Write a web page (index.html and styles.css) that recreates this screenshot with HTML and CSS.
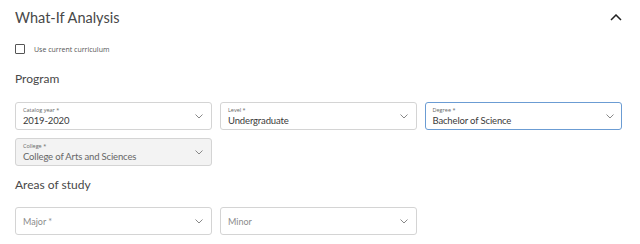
FILE: index.html
```html
<!DOCTYPE html>
<html lang="en">
<head>
  <meta charset="UTF-8" />
  <title>What-If Analysis</title>
  <link rel="stylesheet" href="styles.css">
</head>
<body>

<section class="panel">
  <header class="panel-head">
    <h1>What-If Analysis</h1>
    <button class="collapse" aria-label="Collapse">
      <svg width="12" height="7" viewBox="0 0 12 7"><path d="M1 6 L6 1 L11 6" fill="none" stroke="#222" stroke-width="1.5"/></svg>
    </button>
  </header>

  <label class="check">
    <span class="box"></span>
    <span>Use current curriculum</span>
  </label>

  <h2 class="program">Program</h2>
  <div class="fields">
    <div class="field">
      <div class="text">
        <span class="label">Catalog year *</span>
        <span class="value">2019-2020</span>
      </div>
      <svg class="chev" width="8" height="5" viewBox="0 0 8 5"><path d="M0.5 0.5 L4 4 L7.5 0.5" fill="none" stroke="#888" stroke-width="1"/></svg>
    </div>
    <div class="field">
      <div class="text">
        <span class="label">Level *</span>
        <span class="value">Undergraduate</span>
      </div>
      <svg class="chev" width="8" height="5" viewBox="0 0 8 5"><path d="M0.5 0.5 L4 4 L7.5 0.5" fill="none" stroke="#888" stroke-width="1"/></svg>
    </div>
    <div class="field focused">
      <div class="text">
        <span class="label">Degree *</span>
        <span class="value">Bachelor of Science</span>
      </div>
      <svg class="chev" width="8" height="5" viewBox="0 0 8 5"><path d="M0.5 0.5 L4 4 L7.5 0.5" fill="none" stroke="#888" stroke-width="1"/></svg>
    </div>
    <div class="field disabled">
      <div class="text">
        <span class="label">College *</span>
        <span class="value">College of Arts and Sciences</span>
      </div>
      <svg class="chev" width="8" height="5" viewBox="0 0 8 5"><path d="M0.5 0.5 L4 4 L7.5 0.5" fill="none" stroke="#888" stroke-width="1"/></svg>
    </div>
  </div>

  <h2 class="areas">Areas of study</h2>
  <div class="fields">
    <div class="field">
      <span class="placeholder">Major *</span>
      <svg class="chev" width="8" height="5" viewBox="0 0 8 5"><path d="M0.5 0.5 L4 4 L7.5 0.5" fill="none" stroke="#888" stroke-width="1"/></svg>
    </div>
    <div class="field">
      <span class="placeholder">Minor</span>
      <svg class="chev" width="8" height="5" viewBox="0 0 8 5"><path d="M0.5 0.5 L4 4 L7.5 0.5" fill="none" stroke="#888" stroke-width="1"/></svg>
    </div>
  </div>
</section>

</body>
</html>
```

FILE: styles.css
```css
* {
  box-sizing: border-box;
}

body {
  margin: 0;
  background: #fff;
  font-family: 'Lato', sans-serif;
  color: #222;
}

.panel {
  padding: 6px 17px 0 15px;
}

.panel-head {
  display: flex;
  justify-content: space-between;
  align-items: center;
  height: 22px;
}

.panel-head h1 {
  margin: 0;
  font-size: 14.5px;
  font-weight: 400;
  color: #484848;
}

.collapse {
  border: none;
  background: none;
  padding: 0;
  width: 12px;
  height: 7px;
  display: flex;
  margin-right: 1px;
}

.check {
  display: flex;
  align-items: center;
  gap: 9px;
  margin-top: 16px;
  font-family: 'Open Sans', sans-serif;
  font-size: 7px;
  color: #555;
}

.check .box {
  width: 10px;
  height: 10px;
  border: 1px solid #555;
  border-radius: 1px;
}

h2 {
  font-size: 12px;
  font-weight: 400;
  color: #484848;
}

h2.program {
  margin: 17px 0 16px;
}

h2.areas {
  margin: 11px 0 15px;
}

.fields {
  display: grid;
  grid-template-columns: repeat(3, 197px);
  gap: 8px 8px;
}

.field {
  height: 28px;
  border: 1px solid #d4d4d4;
  border-radius: 3px;
  display: flex;
  align-items: center;
  justify-content: space-between;
  padding: 0 7px 0 7px;
  background: #fff;
}

.field .text {
  display: flex;
  flex-direction: column;
  line-height: 1;
  padding-top: 1px;
}

.label {
  font-family: 'Open Sans', sans-serif;
  font-size: 5.5px;
  color: #666;
  margin-bottom: 2px;
}

.value {
  font-size: 9.5px;
  letter-spacing: -0.15px;
  color: #3a3a3a;
}

.placeholder {
  font-size: 9px;
  color: #8c8c8c;
}

.chev {
  margin-right: 1px;
}

.field.focused {
  border: 1.5px solid #6b9cd3;
  padding-left: 6.5px;
  padding-right: 6.5px;
}

.field.disabled {
  background: #f3f3f3;
}

.field.disabled .value {
  color: #666;
}
```
